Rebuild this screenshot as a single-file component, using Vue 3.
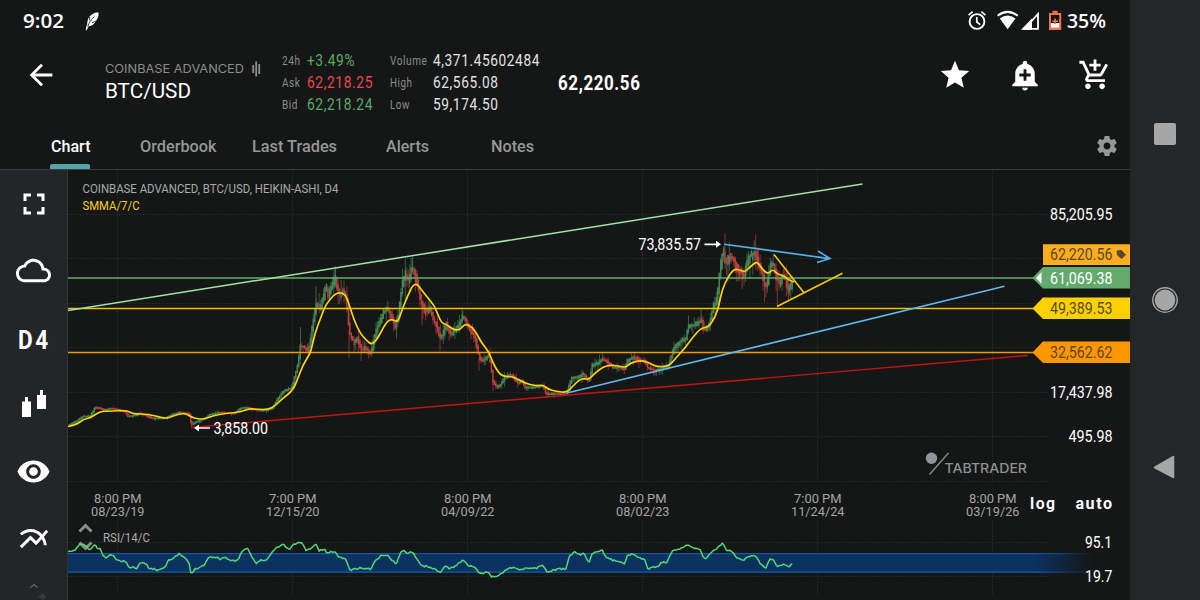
<template>
  <div class="screen">
    <div class="app">
      <div class="status-bar">
        <FitText class="white" text="9:02" :w="41" :size="20" :weight="600" family="Open Sans" />
        <svg class="feather" width="14" height="19" viewBox="0 0 14 19">
          <path d="M.8 18.300C.8 16 1.300 14 2.200 12.500C2.200 7.500 4.500 3.500 8 1.800C10 .7 12 .2 13.500 .6C13.900 4 13 6.500 11.200 8.500C9.500 12 7 14.200 3.600 14.200L1.700 18.300Z" fill="#fff" />
          <path d="M2.600 14.500C4.200 10.500 6.200 7.500 9.500 4.500M4.700 4.800V8.500M7 10.800L11 9" stroke="#151716" stroke-width=".8" fill="none" />
        </svg>
        <svg class="system-icons" width="96" height="22" viewBox="966 10 96 22">
          <g fill="none" stroke="#fff" stroke-width="1.9">
            <circle cx="977" cy="21.5" r="7.4" />
            <path d="M976.8 17v5l3.4 2.6M968.6 15.2l4-3.5M985.4 15.2l-4-3.5" stroke-width="1.7" />
          </g>
          <path d="M997.6 15.8Q1007.6 8 1017.8 15.8" fill="none" stroke="#fff" stroke-width="2" />
          <path d="M999.8 18.4Q1007.6 12.6 1015.5 18.4L1007.6 29.2Z" fill="#fff" />
          <path d="M1038 14v14.8h-13.6z" fill="none" stroke="#fff" stroke-width="1.8" />
          <path d="M1021 29.7L1032 18.5V29.7z" fill="#fff" />
          <path d="M1049 13h3.6v-2.2h5V13h3.6v17h-12.2z" fill="#ee7350" />
          <path d="M1051 15h8.2v8h-8.2z" fill="#151716" />
          <path d="M1051 23.2h8.2v4.4h-8.2z" fill="#fff" />
          <path d="M1054.3 18.5h1.6v2h2v1.6h-2v2h-1.6v-2h-2v-1.6h2z" fill="#ee7350" />
        </svg>
        <FitText class="white" text="35%" :w="39" :size="20" :weight="600" family="Open Sans" />
      </div>

      <header class="header">
        <svg class="back" width="34" height="34" viewBox="0 0 24 24">
          <path d="M20 10.900H7.800l5.600-5.500L12 4l-8 8 8 8 1.400-1.400L7.800 13.100H20z" />
        </svg>
        <div class="pair">
          <div class="exchange">
            <FitText class="dim" text="COINBASE ADVANCED" :w="139" :size="12" family="Inter" />
            <svg width="9" height="16" viewBox="0 0 9 16">
              <path d="M1.2 4v8M4.2 .5v15M7.2 3v10" stroke="#8b8c8c" stroke-width="1.8" />
            </svg>
          </div>
          <FitText class="white" text="BTC/USD" :w="86" :size="20" />
        </div>
        <div class="quotes">
          <template v-for="q in quotes" :key="q.label">
            <FitText class="dim" :text="q.label" :w="q.lw" :size="12.5" :gap="0.7" />
            <FitText :class="q.tone" :text="q.value" :w="q.vw" :size="16" :gap="0.7" />
          </template>
        </div>
        <FitText class="white" text="62,220.56" :w="82.5" :size="20" :weight="700" :gap="0.7" />
        <div class="actions">
          <svg width="34" height="34" viewBox="0 0 24 24">
            <path d="M12 17.27L18.18 21l-1.64-7.03L22 9.24l-7.19-.61L12 2 9.19 8.63 2 9.24l5.46 4.73L5.82 21z" />
          </svg>
          <svg width="34" height="34" viewBox="0 0 24 24">
            <path fill-rule="evenodd" d="M10.01 21.01c0 1.1.89 1.99 1.99 1.99s1.99-.89 1.99-1.99h-3.98zm8.87-4.19V11c0-3.25-2.25-5.97-5.29-6.69v-.72C13.59 2.71 12.88 2 12 2s-1.59.71-1.59 1.59v.72C7.37 5.03 5.12 7.75 5.12 11v5.82L3 18.94V20h18v-1.06l-2.12-2.12zM16 13.01h-3v3h-2v-3H8V11h3V8h2v3h3v2.01z" />
          </svg>
          <svg width="34" height="34" viewBox="0 0 24 24">
            <path d="M11 9h2V6h3V4h-3V1h-2v3H8v2h3v3zm-4 9c-1.1 0-1.99.9-1.99 2S5.9 22 7 22s2-.9 2-2-.9-2-2-2zm10 0c-1.1 0-1.99.9-1.99 2s.89 2 1.99 2 2-.9 2-2-.9-2-2-2zm-9.83-3.25l.03-.12.9-1.63h7.45c.75 0 1.41-.41 1.75-1.03l3.86-7.01L19.42 4h-.01l-1.1 2-2.76 5H8.53l-.13-.27L6.16 6l-.95-2-.94-2H1v2h2l3.6 7.59-1.35 2.45c-.16.28-.25.61-.25.96 0 1.1.9 2 2 2h12v-2H7.42c-.13 0-.25-.11-.25-.25z" />
          </svg>
        </div>
      </header>

      <nav class="tabs">
        <div v-for="t in tabs" :key="t.text" class="tab" :class="{ active: t.active }">
          <FitText :text="t.text" :w="t.w" :size="16" :weight="500" />
        </div>
        <svg class="gear" width="24" height="24" viewBox="0 0 24 24">
          <path d="M19.43 12.98c.04-.32.07-.64.07-.98s-.03-.66-.07-.98l2.11-1.65c.19-.15.24-.42.12-.64l-2-3.46c-.12-.22-.39-.3-.61-.22l-2.49 1c-.52-.4-1.08-.73-1.69-.98l-.38-2.65C14.46 2.18 14.25 2 14 2h-4c-.25 0-.46.18-.49.42l-.38 2.65c-.61.25-1.17.59-1.69.98l-2.49-1c-.23-.09-.49 0-.61.22l-2 3.46c-.13.22-.07.49.12.64l2.11 1.65c-.04.32-.07.65-.07.98s.03.66.07.98l-2.11 1.65c-.19.15-.24.42-.12.64l2 3.46c.12.22.39.3.61.22l2.49-1c.52.4 1.08.73 1.69.98l.38 2.65c.03.24.24.42.49.42h4c.25 0 .46-.18.49-.42l.38-2.65c.61-.25 1.17-.59 1.69-.98l2.49 1c.23.09.49 0 .61-.22l2-3.46c.12-.22.07-.49-.12-.64l-2.11-1.65zM12 15.500c-1.930 0-3.500-1.570-3.500-3.500s1.570-3.500 3.500-3.500 3.500 1.570 3.500 3.500-1.570 3.500-3.500 3.500z" />
        </svg>
      </nav>

      <main class="workspace">
        <aside class="tools">
          <div class="tool">
            <svg width="36" height="36" viewBox="0 0 24 24">
              <path d="M7 14H5v5h5v-2H7v-3zm-2-4h2V7h3V5H5v5zm12 7h-3v2h5v-5h-2v3zM14 5v2h3v3h2V5h-5z" />
            </svg>
          </div>
          <div class="tool">
            <svg width="35" height="35" viewBox="0 0 24 24">
              <path d="M19.350 10.040C18.670 6.590 15.640 4 12 4 9.110 4 6.600 5.640 5.350 8.040 2.340 8.360 0 10.910 0 14c0 3.310 2.690 6 6 6h13c2.760 0 5-2.240 5-5 0-2.640-2.050-4.780-4.650-4.960zM19 18H6c-2.210 0-4-1.790-4-4s1.790-4 4-4h.71C7.370 7.690 9.480 6 12 6c3.040 0 5.500 2.460 5.500 5.500v.5H19c1.660 0 3 1.340 3 3s-1.340 3-3 3z" />
            </svg>
          </div>
          <div class="tool">
            <FitText class="white" text="D4" :w="33" :size="25" :weight="700" :gap="3" />
          </div>
          <div class="tool">
            <svg class="candle-icon" width="26" height="28" viewBox="0 0 26 28">
              <path d="M1 12.5h3V8h3v4.5h3V28H1zM16 6h3V1h3v5h3v14h-9z" />
            </svg>
          </div>
          <div class="tool">
            <svg width="35" height="35" viewBox="0 0 24 24">
              <path d="M12 4.5C7 4.5 2.730 7.610 1 12c1.730 4.390 6 7.500 11 7.500s9.270-3.110 11-7.500c-1.730-4.390-6-7.500-11-7.500zM12 17c-2.760 0-5-2.240-5-5s2.240-5 5-5 5 2.240 5 5-2.240 5-5 5zm0-8c-1.660 0-3 1.340-3 3s1.340 3 3 3 3-1.340 3-3-1.340-3-3-3z" />
            </svg>
          </div>
          <div class="tool">
            <svg width="34" height="34" viewBox="0 0 24 24">
              <path d="M22 6.920l-1.410-1.410-2.850 3.210C15.680 6.400 12.830 5 9.610 5 6.720 5 4.070 6.160 2 8l1.420 1.420C5.120 7.930 7.270 7 9.610 7c2.740 0 5.090 1.260 6.770 3.240l-2.880 3.240-4-4L2 16.990l1.500 1.500 6-6.010 4 4 4.050-4.550c.75 1.350 1.250 2.900 1.440 4.550H21c-.22-2.300-.95-4.390-2.040-6.140L22 6.920z" />
            </svg>
          </div>
          <svg class="more" width="28" height="18" viewBox="0 0 28 18">
            <path d="M10.500 4.500L14 1.500l3.500 3" fill="none" stroke="#66676a" stroke-width="1.300" />
            <path d="M18.500 14l4-4 4 4-4 3z" fill="#3b3c3f" />
          </svg>
        </aside>

        <svg class="chart" width="1062" height="430" viewBox="68 170 1062 430">
          <defs>
            <linearGradient id="band" gradientUnits="userSpaceOnUse" x1="1035" y1="0" x2="1092" y2="0">
              <stop offset="0" stop-color="#0b3160" />
              <stop offset="1" stop-color="#0b3160" stop-opacity="0" />
            </linearGradient>
            <linearGradient id="bandEdge" gradientUnits="userSpaceOnUse" x1="1035" y1="0" x2="1092" y2="0">
              <stop offset="0" stop-color="#1457a4" />
              <stop offset="1" stop-color="#1457a4" stop-opacity="0" />
            </linearGradient>
          </defs>

          <!-- Grid -->
          <g class="grid">
            <path v-for="x in gridX" :key="'x' + x" :d="`M${x} 170V481M${x} 521V596`" />
            <path v-for="y in gridY" :key="'y' + y" :d="`M68 ${y}H1048`" />
          </g>

          <!-- RSI pane -->
          <rect x="68" y="553" width="1030" height="20" fill="url(#band)" />
          <rect x="68" y="553" width="1030" height="1.2" fill="url(#bandEdge)" />
          <rect x="68" y="571.5" width="1030" height="1.2" fill="url(#bandEdge)" />
          <path d="M68 559.5H1048" class="band-mid" />
          <g class="pane-handle">
            <path d="M79.5 531.500l6-6 6 6M79.5 542.500l6 6 6-6" />
          </g>
          <path :d="rsi" class="rsi" />

          <!-- Candles -->
          <path :d="candles.upWick" class="wick up" />
          <path :d="candles.downWick" class="wick down" />
          <path :d="candles.up" class="body up" />
          <path :d="candles.down" class="body down" />

          <!-- Drawings -->
          <path v-for="l in lines" :key="l.d" :d="l.d" :stroke="l.color" :stroke-width="l.w" fill="none" />
          <path :d="smma" class="smma" />

          <!-- High and low markers -->
          <path d="M704.5 244.300H719M210 428H196" class="marker" />
          <path d="M716 240.800l5 3.500-5 3.500zM199 424.500l-5 3.500 5 3.500z" fill="#fff" />

          <!-- Price flags -->
          <path d="M1043 244.300h87v20.700h-87z" fill="#fdae20" />
          <path d="M1032.500 278l10.500-11h87v21.500h-87z" fill="#63ab6c" />
          <path d="M1036 278l5.500-6v12z" fill="#fff" />
          <path d="M1032.500 308.500l10.500-11h87V319h-87z" fill="#fdd000" />
          <path d="M1032.500 352.500l10.500-11h87V363h-87z" fill="#fd9600" />
          <path d="M1117 251l4.500-.5 4 4.500-4 3.500-4-3.500z" fill="#57482c" stroke="#57482c" stroke-linejoin="round" />

          <!-- Watermark -->
          <circle cx="931.500" cy="458.200" r="5.700" fill="#94949b" />
          <path d="M929.500 474.500L948.500 453" stroke="#8a8a8c" stroke-width="1.400" />

          <text
            v-for="t in labels"
            :key="t.text + t.x"
            :x="t.x"
            :y="t.y"
            :textLength="t.w"
            lengthAdjust="spacingAndGlyphs"
            :letter-spacing="t.gap || 0"
            :font-size="t.size"
            :fill="t.color"
            :font-weight="t.weight || 400"
            :font-family="t.family || 'Roboto'"
          >{{ t.text }}</text>
        </svg>
      </main>
    </div>

    <div class="system-nav">
      <div class="recent"></div>
      <svg width="26" height="26" viewBox="0 0 26 26">
        <circle cx="13" cy="13" r="12.2" fill="none" stroke="#a6a6a6" stroke-width="1.4" />
        <circle cx="13" cy="13" r="10.4" fill="#a6a6a6" />
      </svg>
      <svg class="nav-back" width="24" height="24" viewBox="0 0 24 24">
        <path d="M1.500 12.500L20.500 1.500v21z" fill="#a6a6a6" stroke="#a6a6a6" stroke-width="1.500" stroke-linejoin="round" />
      </svg>
    </div>
  </div>
</template>

<script setup>
import { h } from 'vue'

// Single line of text squeezed or stretched to a given width
const FitText = (props) =>
  h('svg', { class: 'fit-text', width: props.w, height: props.size, overflow: 'visible' }, [
    h('text', {
      x: 0,
      y: props.size * 0.86,
      fill: 'currentColor',
      textLength: props.w,
      lengthAdjust: 'spacingAndGlyphs',
      'letter-spacing': props.gap || 0,
      'font-size': props.size,
      'font-weight': props.weight || 400,
      'font-family': props.family || 'Roboto'
    }, props.text)
  ])
FitText.props = { text: String, w: Number, size: Number, weight: Number, family: String, gap: Number }

const quotes = [
  { label: '24h', lw: 18.5, value: '+3.49%', vw: 48, tone: 'up' },
  { label: 'Volume', lw: 37.5, value: '4,371.45602484', vw: 107, tone: 'light' },
  { label: 'Ask', lw: 18.5, value: '62,218.25', vw: 66, tone: 'down' },
  { label: 'High', lw: 22.5, value: '62,565.08', vw: 65.5, tone: 'light' },
  { label: 'Bid', lw: 16, value: '62,218.24', vw: 66, tone: 'up' },
  { label: 'Low', lw: 20, value: '59,174.50', vw: 65.5, tone: 'light' }
]

const tabs = [
  { text: 'Chart', w: 39.5, active: true },
  { text: 'Orderbook', w: 76.5 },
  { text: 'Last Trades', w: 85 },
  { text: 'Alerts', w: 43 },
  { text: 'Notes', w: 43 }
]

const gridX = [117.5, 292.5, 467.5, 642.5, 817.5, 992.5]
const gridY = [214.5, 258.5, 303.5, 347.5, 392.5, 436.5, 481.5, 542.5, 576.5]

const lines = [
  { d: 'M68 278H1035', color: '#5fb06b', w: 1.5 },
  { d: 'M68 308.5H1035', color: '#eac200', w: 1.6 },
  { d: 'M68 352.5H1035', color: '#f29a05', w: 1.6 },
  { d: 'M68 310.5L862.5 184', color: '#a0e3a8', w: 1.5 },
  { d: 'M191 427.5L1027.5 355.5', color: '#c3150f', w: 1.4 },
  { d: 'M567 393L1004.5 286.2', color: '#61b8ec', w: 1.6 },
  { d: 'M724 244.2L829.5 258.6M818 251l12 7.6-13 4', color: '#54b2ea', w: 1.6 },
  { d: 'M774 254.5L804 292.7', color: '#f3c80c', w: 1.6 },
  { d: 'M777 306.5L842.5 273.3', color: '#f3c80c', w: 1.6 }
]

const dates = [
  ['8:00 PM', '08/23/19'],
  ['7:00 PM', '12/15/20'],
  ['8:00 PM', '04/09/22'],
  ['8:00 PM', '08/02/23'],
  ['7:00 PM', '11/24/24'],
  ['8:00 PM', '03/19/26']
]

const labels = [
  { text: 'COINBASE ADVANCED, BTC/USD, HEIKIN-ASHI, D4', x: 82.5, y: 193.3, w: 256, size: 13.5, color: '#a9a9ac' },
  { text: 'SMMA/7/C', x: 82.5, y: 210.3, w: 57, size: 13.5, color: '#f5cf0b' },
  { text: 'RSI/14/C', x: 103, y: 542, w: 47, size: 13.5, color: '#a9a9ac' },
  { text: '73,835.57', x: 638.5, y: 249.6, w: 62.5, size: 16, color: '#fff' },
  { text: '3,858.00', x: 213.5, y: 433.6, w: 54.5, size: 16, color: '#fff' },
  { text: '85,205.95', x: 1050, y: 220, w: 62.5, size: 16, color: '#fff' },
  { text: '62,220.56', x: 1050, y: 260, w: 62.5, size: 16, color: '#57482c' },
  { text: '61,069.38', x: 1050, y: 283.6, w: 62.5, size: 16, color: '#fff' },
  { text: '49,389.53', x: 1050, y: 314, w: 62.5, size: 16, color: '#5a4c18' },
  { text: '32,562.62', x: 1050, y: 358, w: 62.5, size: 16, color: '#5f4522' },
  { text: '17,437.98', x: 1050, y: 397.9, w: 62.5, size: 16, color: '#fff' },
  { text: '495.98', x: 1068.5, y: 442.2, w: 44, size: 16, color: '#fff' },
  { text: '95.1', x: 1085, y: 547.8, w: 27, size: 16, color: '#fff' },
  { text: '19.7', x: 1085, y: 582.2, w: 27.5, size: 16, color: '#fff' },
  { text: 'log', x: 1030, y: 509.2, w: 26.5, size: 16, color: '#fff', weight: 700, gap: 1.5 },
  { text: 'auto', x: 1075.5, y: 509.2, w: 38, size: 16, color: '#fff', weight: 700, gap: 1.5 },
  { text: 'TABTRADER', x: 944.5, y: 472.5, w: 82.5, size: 12.8, color: '#8f9091', weight: 500, family: 'Inter' },
  ...dates.flatMap(([time, day], i) => [
    { text: time, x: gridX[i] - 23.5, y: 502.6, w: 47.5, size: 13.5, color: '#a4a4a6' },
    { text: day, x: gridX[i] - 26.5, y: 515.9, w: 53.5, size: 13.5, color: '#a4a4a6' }
  ])
]

const parse = (s) => s.trim().split(/\s+/).map((p) => p.split(',').map(Number))

const price = parse(`
  68,425 76,421 83,416 90,416 95,407 100,408 105,410 110,408 116,409 125,411 128,416 135,415 140,413
  148,416 152,418 165,418 172,414 180,412 188,413 190,415 191,425 195,422 205,418 210,414 220,412 235,413
  240,408 247,407 257,410 265,410 272,408 278,398 283,391 290,388 292,386 295,375 298,363 300,346 304,347
  308,350 310,343 312,327 315,309 317,304 320,308 323,297 326,285 328,295 331,288 335,277 337,287 340,295
  343,290 346,297 348,320 350,335 355,343 357,337 360,345 362,350 365,347 370,353 372,347 375,333 380,320
  384,311 388,308 391,317 395,325 398,317 400,300 402,283 405,273 408,280 410,275 412,267 415,275 418,287
  421,300 424,310 427,312 430,307 433,318 437,327 440,338 443,333 446,323 450,333 455,330 460,323 463,315
  466,322 470,330 475,337 477,347 479,357 482,360 485,358 489,355 491,367 493,382 497,387 500,385 504,378
  509,375 513,376 518,383 522,380 525,387 532,387 538,386 543,385 545,392 548,394 556,393 563,394 567,392
  569,385 572,377 578,377 583,373 588,380 590,377 592,365 597,363 602,359 608,362 613,367 620,367 625,368
  627,360 633,357 640,360 645,361 648,368 655,370 662,368 669,365 672,352 676,345 682,340 686,337 688,326
  693,325 697,323 701,320 704,330 708,327 711,317 713,305 716,302 718,287 720,267 723,250 726,262 729,257
  733,258 736,267 740,272 744,275 747,262 750,255 755,253 758,262 762,273 765,287 768,280 770,267 773,263
  776,275 779,283 782,277 785,278 788,288 791,285 794,280
`)

const average = parse(`
  68,426.5 76,425 84,419 90,418 96,414 101,411.5 108,411 127,410.5 133,414 148,414 163,418 168,418
  180,413.5 187,414 191,417 198,419 205,419 215,415 230,413 240,412 250,408.5 258,409.5 268,409.5
  275,406 283,398 293,390.5 298,378 303,365 308,357 311,351 315,333 321,317 326,304 336,292.5 345,293.5
  349,304 354,320 360,333 366,340 372,345 378,338 384,326 389,319.5 394,320 398,322 402,310 408,295
  413,285 417,284 421,289 427,297 434,305 438,315 442,323.5 447,324.5 452,329 459,330.5 463,326 466,324
  472,327 477,334 481,342 489,352 493,363 498,372 503,376.5 512,376.5 517,379 525,383 535,386 543,385
  548,389 556,391.5 567,392.5 572,387 579,380 584,378.5 589,379.5 595,373 603,367 610,365 618,366
  626,367.5 629,364 637,360.8 645,361 651,364 658,367 669,366 675,359 685,348 693,337 701,328 709,327
  716,315 719,305 722,290 728,277 734,269 740,270 745,272 750,267 756,262 759,264 763,270 768,274 773,269
  777,274 784,276 789,280 794,282
`)

const strength = parse(`
  68,552 74,551 80,544 85,545 89,550 95,545 98,549 100,548 103,556 107,558 111,554 115,558 119,561 125,561
  129,567 137,568 140,562 146,564 149,568 153,569 158,570 165,567 168,560 173,559 179,554 185,558 189,563
  191,574 195,569 204,565 209,557 215,557 220,559 225,557 231,561 238,560 242,551 248,549 252,557 256,563
  261,560 266,561 270,555 275,549 283,544 289,550 294,544 302,542 306,551 311,548 316,544 319,551 324,549
  327,553 335,551 338,557 345,558 350,570 360,568 371,569 375,561 382,555 387,555 391,559 396,564 401,552
  404,551 407,553 412,551 417,559 422,566 431,567 440,573 445,566 450,569 455,566 463,560 469,566 475,567
  479,574 488,572 492,577 500,575 505,570 513,567 520,570 527,568 537,568 543,565 547,572 558,569 566,569
  569,557 574,552 580,555 584,553 589,563 592,553 600,552 602,550 606,557 612,560 619,561 624,564 628,555
  634,554 640,558 645,560 648,569 653,567 657,567 662,562 667,563 672,551 678,549 685,547 688,544 692,548
  700,549 705,560 711,553 716,549 723,543 727,551 732,551 736,557 744,560 748,556 755,556 760,563 766,568
  770,559 774,560 777,567 783,564 789,567 793,563
`)

// Rounded joints through the midpoints of the segments
const smooth = (pts) => {
  let d = `M${pts[0]}`
  for (let i = 1; i < pts.length - 1; i++) {
    const [x, y] = pts[i]
    const [nx, ny] = pts[i + 1]
    d += `Q${x} ${y} ${(x + nx) / 2} ${(y + ny) / 2}`
  }
  return d + `L${pts[pts.length - 1]}`
}
const smma = smooth(average)

const valueAt = (pts, x) => {
  const i = Math.max(1, pts.findIndex((p) => p[0] >= x))
  const [x0, y0] = pts[i - 1]
  const [x1, y1] = pts[i]
  return y0 + ((y1 - y0) * (x - x0)) / (x1 - x0)
}

let seed = 11
const rand = () => {
  seed = (seed * 16807) % 2147483647
  return seed / 2147483647
}

let rsi = 'M68 552'
for (let x = 69.5; x < 793; x += 1.46) {
  rsi += `L${x.toFixed(1)} ${(valueAt(strength, x) + (rand() - 0.5) * 1.6).toFixed(1)}`
}

// One candle every 1.46px; price swings grow with the level
const candles = { up: '', down: '', upWick: '', downWick: '' }
for (let x = 69.5; x < 793; x += 1.46) {
  const a = valueAt(price, x - 1.46)
  const b = valueAt(price, x)
  const swing = 1.2 + Math.max(0, 405 - b) * 0.065
  const dir = b <= a ? 'up' : 'down'
  const top = Math.min(a, b) - swing * 0.4 * rand()
  const bottom = Math.max(a, b) + swing * 0.5 * rand() + 0.8
  const px = x.toFixed(1)
  const high = top - swing * 2 * rand() * rand()
  const low = bottom + swing * 2 * rand() * rand()
  candles[dir] += `M${px} ${top.toFixed(1)}V${bottom.toFixed(1)}`
  candles[dir + 'Wick'] += `M${px} ${high.toFixed(1)}V${low.toFixed(1)}`
}
// Long wicks at the notable extremes
candles.upWick += 'M724 246V262M335.5 269V282M412.5 257V272M300.5 327V345M316 286V306M463 311V320M701 308V322'
candles.downWick += 'M777.3 276V306M349 330V358M422 302V325M479 358V371M440 338V351M191.5 420V428M788.5 285V301M493 380V391M361 345V361M766 285V297M742 275V289'
</script>

<style>
body {
  background: #151716;
  overflow: hidden;
}
</style>

<style scoped>
.screen {
  display: flex;
  width: 1200px;
  height: 600px;
  background: #151716;
  font-family: Roboto, sans-serif;
}
.app {
  display: flex;
  flex-direction: column;
  width: 1130px;
}
.fit-text {
  display: block;
  flex: none;
}
.white { color: #fff; }
.light { color: #e2e2e2; }
.dim { color: #8b8c8c; }
.up { color: #5bab66; }
.down { color: #e9474f; }

.status-bar {
  display: flex;
  align-items: center;
  height: 42px;
  padding: 0 24px 0 23px;
}
.feather { margin-left: 21px; }
.system-icons {
  margin-left: auto;
  margin-right: 5px;
}

.header {
  display: flex;
  align-items: center;
  height: 82px;
  padding: 0 18px 0 24px;
}
.back {
  fill: #fff;
  margin-top: -16px;
}
.pair {
  width: 177px;
  margin-left: 46.5px;
  margin-top: -5px;
}
.exchange {
  display: flex;
  align-items: center;
  gap: 8px;
  margin-bottom: 4px;
}
.quotes {
  display: grid;
  grid-template-columns: 25px 83.5px 43px 125px;
  grid-auto-rows: 22px;
  align-items: center;
  margin-top: -2px;
}
.actions {
  display: flex;
  gap: 36px;
  margin-left: auto;
  margin-top: -17px;
  fill: #fff;
}

.tabs {
  display: flex;
  align-items: center;
  height: 45px;
  padding: 0 11.5px 0 50.5px;
  border-bottom: 1px solid #3a3b3c;
  color: #969797;
}
.tab {
  position: relative;
  display: flex;
  align-items: center;
  height: 45px;
  box-sizing: border-box;
  padding-bottom: 2px;
}
.tab:nth-child(2) { margin-left: 50px; }
.tab:nth-child(3) { margin-left: 35.5px; }
.tab:nth-child(4) { margin-left: 48.5px; }
.tab:nth-child(5) { margin-left: 62px; }
.tab.active { color: #fff; }
.tab.active::after {
  content: '';
  position: absolute;
  left: -0.5px;
  right: 0;
  bottom: 0;
  height: 5px;
  border-radius: 2px 2px 0 0;
  background: #57a5ac;
}
.gear {
  margin-left: auto;
  margin-bottom: 2px;
  fill: #969797;
}

.workspace {
  display: flex;
  height: 430px;
}
.tools {
  display: flex;
  flex-direction: column;
  align-items: center;
  width: 67px;
  height: 430px;
  overflow: hidden;
  background: #242528;
  border-right: 1px solid #343537;
}
.tool {
  display: flex;
  align-items: center;
  justify-content: center;
  flex: none;
  width: 67px;
  height: 67px;
  fill: #fff;
}
.tool .fit-text {
  margin-top: 3px;
  margin-left: 2px;
}
.candle-icon {
  margin-bottom: 3px;
}
.more {
  flex: none;
  margin-top: 11px;
}

.chart { display: block; }
.grid path {
  stroke: #2a2c2c;
  stroke-width: 1;
  stroke-dasharray: 1.5 1.5;
}
.band-mid {
  stroke: #173b66;
  stroke-width: 1;
  stroke-dasharray: 1.5 2.5;
}
.pane-handle path {
  fill: none;
  stroke: #8b8c8e;
  stroke-width: 3;
}
.rsi {
  fill: none;
  stroke: #4fd873;
  stroke-width: 1.5;
  stroke-linejoin: round;
}
.body {
  stroke-width: 1.4;
  fill: none;
}
.wick {
  stroke-width: 1;
  opacity: 0.65;
  fill: none;
}
.body.up,
.wick.up { stroke: #478657; }
.body.down,
.wick.down { stroke: #b8413f; }
.smma {
  fill: none;
  stroke: #fbd30d;
  stroke-width: 1.7;
}
.marker {
  fill: none;
  stroke: #fff;
  stroke-width: 1.7;
}

.system-nav {
  display: flex;
  flex-direction: column;
  align-items: center;
  justify-content: space-between;
  width: 70px;
  padding: 122.5px 0 121.5px;
  box-sizing: border-box;
  background: #252628;
}
.recent {
  width: 22px;
  height: 22px;
  border-radius: 2px;
  background: #a6a6a6;
}
.nav-back { margin-right: 1px; }
</style>
